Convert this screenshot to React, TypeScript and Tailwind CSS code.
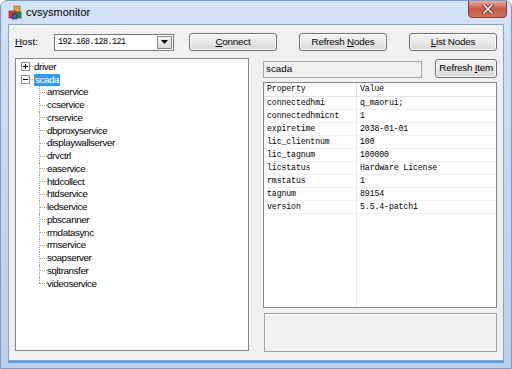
import React from "react";

const props: [string, string][] = [
  ["connectedhmi", "q_maorui;"],
  ["connectedhmicnt", "1"],
  ["expiretime", "2038-01-01"],
  ["lic_clientnum", "100"],
  ["lic_tagnum", "100000"],
  ["licstatus", "Hardware License"],
  ["rmstatus", "1"],
  ["tagnum", "89154"],
  ["version", "5.5.4-patch1"],
];

const services = [
  "amservice",
  "ccservice",
  "crservice",
  "dbproxyservice",
  "displaywallserver",
  "drvctrl",
  "easervice",
  "htdcollect",
  "htdservice",
  "ledservice",
  "pbscanner",
  "rmdatasync",
  "rmservice",
  "soapserver",
  "sqltransfer",
  "videoservice",
];

const Btn = ({ children, className = "" }: { children: React.ReactNode; className?: string }) => (
  <div
    className={`flex items-center justify-center whitespace-nowrap rounded-[3px] border border-[#707070] bg-linear-to-b from-[#f4f4f4] via-[#eaeaea] to-[#d6d6d6] text-[9.8px] tracking-[-0.2px] text-black shadow-[inset_0_0_0_1px_#fcfcfc] ${className}`}
  >
    {children}
  </div>
);

const ExpandBox = ({ minus }: { minus?: boolean }) => (
  <div className="relative h-[9px] w-[9px] border border-[#919191] bg-white">
    <div className="absolute left-[1px] top-[3px] h-px w-[5px] bg-black" />
    {!minus && <div className="absolute left-[3px] top-[1px] h-[5px] w-px bg-black" />}
  </div>
);

const AppIcon = () => (
  <svg width="15" height="15" viewBox="0 0 15 15">
    <rect x="6" y="1" width="6" height="6" fill="#e2a23a" stroke="#8a5a10" strokeWidth="0.6" />
    <rect x="1" y="6" width="6" height="7" fill="#d43b2f" stroke="#7a1a12" strokeWidth="0.6" />
    <rect x="7" y="7" width="6" height="6" fill="#2f8a3c" stroke="#17501e" strokeWidth="0.6" />
    <rect x="4" y="9" width="5" height="5" fill="#2f5fc0" stroke="#14306e" strokeWidth="0.6" />
  </svg>
);

export default function App() {
  return (
    <div className="flex h-[369px] w-[512px] flex-col overflow-hidden rounded-t-[7px] border border-[#7d9cc4] bg-linear-to-b from-[#d3e2f4] via-[#c4d7ef] to-[#b9cfea] font-['Liberation_Sans',Arial,sans-serif]">
      {/* title bar */}
      <div className="relative flex h-[23px] shrink-0 items-center pl-[7px]">
        <AppIcon />
        <span className="ml-[3px] text-[11px] text-black">cvsysmonitor</span>
        <div className="absolute right-[4px] top-[-1px] flex h-[18px] w-[39px] items-center justify-center rounded-b-[4px] border border-[#8a3a30] bg-linear-to-b from-[#e8b0a4] via-[#c85a48] to-[#d27258]">
          <svg width="12" height="10" viewBox="0 0 12 10">
            <path d="M2 1 L10 9 M10 1 L2 9" stroke="#5a2018" strokeWidth="3.2" strokeLinecap="square" />
            <path d="M2 1 L10 9 M10 1 L2 9" stroke="#ffffff" strokeWidth="1.7" strokeLinecap="square" />
          </svg>
        </div>
      </div>

      {/* client area */}
      <div className="mx-[7px] mb-[7px] flex flex-1 flex-col border border-[#8aa4c6] bg-[#f0f0f0] px-[6px] pt-[8px] shadow-[0_2px_0_#5a9ee0]">
        {/* top row */}
        <div className="flex h-[18px] items-center">
          <div className="w-[39px] text-[9.8px] text-black">
            <span className="underline">H</span>ost:
          </div>
          <div className="flex h-[17px] w-[120px] items-center border border-[#7a7a7a] bg-white pl-[3px]">
            <span className="flex-1 font-['Liberation_Mono',monospace] text-[8.5px] tracking-[-0.6px] text-black">
              192.168.128.121
            </span>
            <div className="mr-[1px] flex h-[13px] w-[15px] items-center justify-center border border-[#8a8a8a] bg-linear-to-b from-[#f4f4f4] to-[#d8d8d8]">
              <svg width="7" height="4" viewBox="0 0 7 4">
                <path d="M0 0 L7 0 L3.5 4 Z" fill="#000" />
              </svg>
            </div>
          </div>
          <Btn className="ml-[15px] h-[18px] w-[88px]">
            <span>
              <span className="underline">C</span>onnect
            </span>
          </Btn>
          <Btn className="ml-[22px] h-[18px] w-[88px]">
            <span>
              Refresh <span className="underline">N</span>odes
            </span>
          </Btn>
          <Btn className="ml-[22px] h-[18px] w-[88px]">
            <span>
              <span className="underline">L</span>ist Nodes
            </span>
          </Btn>
        </div>

        {/* main area */}
        <div className="mt-[7px] flex">
          {/* tree */}
          <div className="h-[293px] w-[234px] border border-[#828790] bg-white pl-[5px] pt-[1px] text-[9.8px] tracking-[-0.4px] text-black">
            <div className="flex h-[13px] items-center">
              <ExpandBox />
              <div className="h-px w-[3px] border-t border-dotted border-[#a0a0a0]" />
              <span className="ml-px leading-[12px]">driver</span>
            </div>
            <div className="flex h-[13px] items-center">
              <ExpandBox minus />
              <div className="h-px w-[3px] border-t border-dotted border-[#a0a0a0]" />
              <span className="ml-px bg-[#3399ff] px-[1px] leading-[12px] text-white">scada</span>
            </div>
            <div className="ml-[18px]">
              {services.map((s, i) => (
                <div key={s} className="relative flex h-[12.75px] items-center">
                  <div
                    className={`absolute left-0 top-0 w-0 border-l border-dotted border-[#a0a0a0] ${
                      i === services.length - 1 ? "h-[6px]" : "h-full"
                    }`}
                  />
                  <div className="h-px w-[8px] border-t border-dotted border-[#a0a0a0]" />
                  <span className="leading-[12px]">{s}</span>
                </div>
              ))}
            </div>
          </div>

          {/* right column */}
          <div className="ml-[14px] flex w-[234px] flex-col">
            <div className="mt-[1px] flex items-start">
              <div className="mt-[2px] flex h-[17px] w-[160px] items-center border border-[#a5a5a5] bg-[#f0f0f0] pl-[2px] text-[9.8px] text-black">
                scada
              </div>
              <Btn className="ml-[13px] h-[19px] w-[62px]">
                <span>
                  Refresh <span className="underline">I</span>tem
                </span>
              </Btn>
            </div>

            <div className="mt-[4px] flex h-[226px] flex-col border border-[#828790] bg-white font-['Liberation_Mono',monospace] text-[8.2px] tracking-[-0.1px] text-black">
              <div className="flex h-[14px] shrink-0 border-b border-[#e5e5e5]">
                <div className="flex w-[93px] items-center border-r border-[#e0e0e0] pl-[3px]">Property</div>
                <div className="flex flex-1 items-center pl-[3px]">Value</div>
              </div>
              {props.map(([k, v]) => (
                <div key={k} className="flex h-[13px] shrink-0 border-b border-[#f2f2f2]">
                  <div className="flex w-[93px] items-center border-r border-[#e8e8e8] pl-[3px]">{k}</div>
                  <div className="flex flex-1 items-center pl-[3px]">{v}</div>
                </div>
              ))}
              <div className="flex flex-1">
                <div className="w-[93px] border-r border-[#e8e8e8]" />
              </div>
            </div>

            <div className="ml-[1px] mt-[5px] h-[39px] w-[233px] border border-[#a0a0a0] bg-[#f0f0f0] shadow-[inset_1px_1px_0_#fafafa]" />
          </div>
        </div>
      </div>
    </div>
  );
}
